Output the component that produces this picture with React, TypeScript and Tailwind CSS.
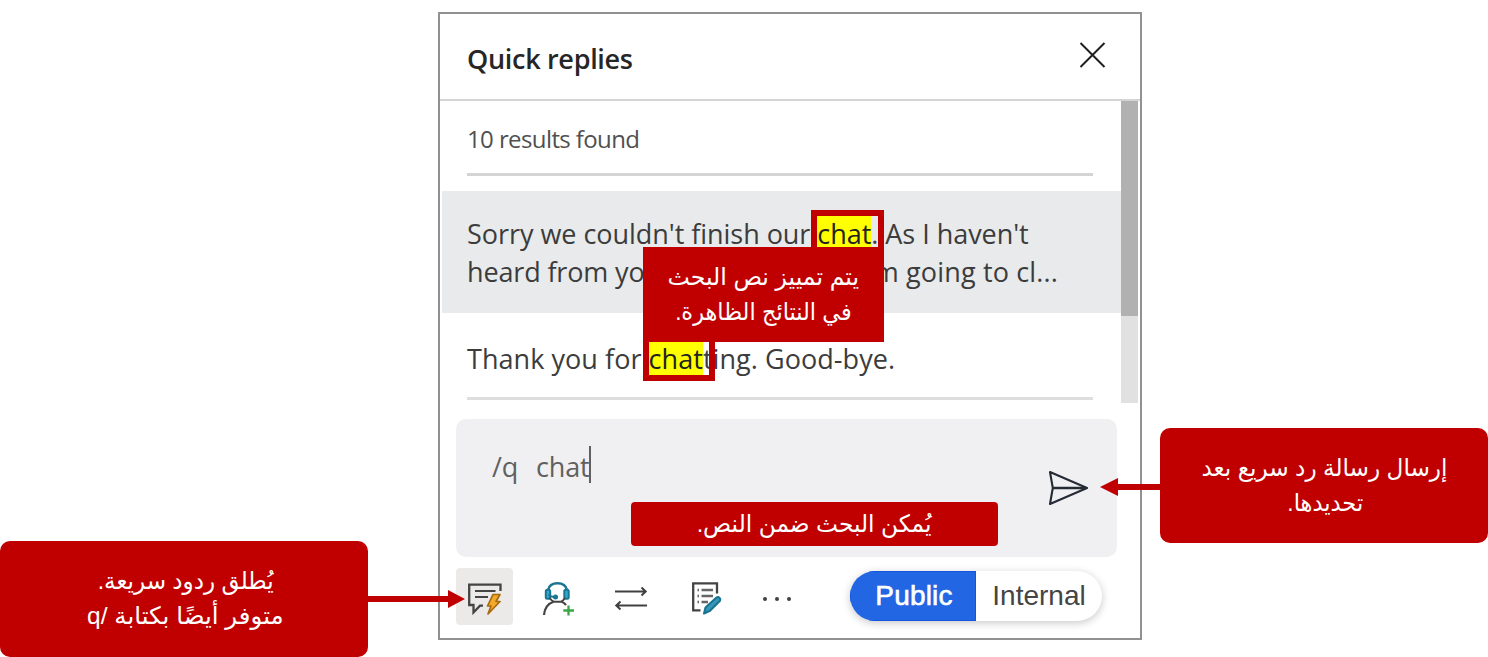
import type { ReactNode } from "react";

const latin = "font-['Open_Sans','Noto_Sans',sans-serif]";
const arabic = "font-['Liberation_Sans','DejaVu_Sans',sans-serif]";

function QuickReplyIcon() {
  return (
    <svg width="37" height="36" viewBox="0 0 37 36" fill="none">
      <path d="M34.5 10V3.700H3.200V24H7.500V31.500L14 24.700H17" stroke="#444" strokeWidth="2.3" />
      <path d="M9 10H29.500M9 16H22" stroke="#444" strokeWidth="2.2" />
      <path d="M27 13.500H34L30 20.500H34L22 33L25 25H21.500Z" fill="#f3a92c" stroke="#a96a0b" strokeWidth="1.7" strokeLinejoin="round" />
    </svg>
  );
}

function AgentIcon() {
  return (
    <svg width="34" height="36" viewBox="0 0 34 36" fill="none">
      <path d="M6 9C7 4.5 10.800 2.200 15.500 2.200S24 4.500 25 9" stroke="#1a7592" strokeWidth="2.5" />
      <rect x="3.800" y="8.800" width="4.400" height="9" rx="1.500" fill="#35a9cb" stroke="#1a7592" strokeWidth="2" />
      <rect x="22.300" y="8.800" width="4.400" height="9" rx="1.500" fill="#35a9cb" stroke="#1a7592" strokeWidth="2" />
      <path d="M7.500 17C9 19 10.500 20.200 12 20.700H19C21 20 22 18.500 23 17" stroke="#444" strokeWidth="2" />
      <path d="M6.500 13.500C8 15.500 10 16 12.500 16" stroke="#1a7592" strokeWidth="1.800" />
      <circle cx="13.500" cy="16" r="2.500" fill="#1a7592" />
      <path d="M2 34C2.600 27 6 22.500 11.500 20.700M19.500 20.700C21.500 21.300 22.800 22.300 24 24" stroke="#444" strokeWidth="2.200" />
      <path d="M26.500 24.500V34.500M21.300 29.500H32" stroke="#3aa648" strokeWidth="2.300" />
    </svg>
  );
}

function TransferIcon() {
  return (
    <svg width="34" height="26" viewBox="0 0 34 26" fill="none" stroke="#404040" strokeWidth="2">
      <path d="M1 6.500H31.500M27.500 2.500L31.700 6.500L27.500 10.500" />
      <path d="M33 20.500H2.500M6.500 16.500L2.300 20.500L6.500 24.500" />
    </svg>
  );
}

function NotesIcon() {
  return (
    <svg width="32" height="34" viewBox="0 0 32 34" fill="none">
      <path d="M26 12.500V2.300H2.200V29.300H9.500" stroke="#444" strokeWidth="2.300" />
      <path d="M6.500 9H8M10.500 9H22M6.500 15H8M10.500 15H22M6.500 21H8M10.500 21H17" stroke="#666" strokeWidth="2.300" />
      <path d="M13 32.500L14.500 26.500L25.500 16.500C27.500 15.200 30.300 17.400 29 19.800L18.500 30.200Z" fill="#3795b5" stroke="#167392" strokeWidth="2" strokeLinejoin="round" />
    </svg>
  );
}

function SendIcon() {
  return (
    <svg width="42" height="36" viewBox="0 0 42 36" fill="none" stroke="#252a34" strokeWidth="2.100" strokeLinejoin="round">
      <path d="M3 2L40 18L3 34L5.800 18Z" />
      <path d="M6 18H39" strokeWidth="2.600" />
    </svg>
  );
}

function Highlight({ children }: { children: ReactNode }) {
  return <mark className="bg-[#ffff00] text-[#222]">{children}</mark>;
}

function Callout({ className, children }: { className: string; children: ReactNode }) {
  return (
    <div dir="rtl" className={`absolute flex flex-col items-center justify-center bg-[#c00000] pb-[2px] text-[24px] leading-[35px] whitespace-nowrap text-white ${arabic} ${className}`}>
      {children}
    </div>
  );
}

export default function App() {
  return (
    <main className="relative h-[657px] w-[1488px] overflow-hidden bg-white pt-3 pl-[438px]">
      <section className={`flex h-[628px] w-[704px] flex-col border-2 border-[#919191] bg-white whitespace-nowrap ${latin}`}>
        <header className="flex h-[87px] shrink-0 justify-between border-b-2 border-[#d4d4d4] pl-[27px] pr-[34px]">
          <h1 className="pt-[26px] text-[27px] leading-[38px] font-semibold tracking-[-0.3px] text-[#262626]">Quick replies</h1>
          <svg className="mt-[27px]" width="28" height="28" viewBox="0 0 28 28" stroke="#202020" strokeWidth="2">
            <path d="M2.500 2L26.500 26M26.500 2L2.500 26" />
          </svg>
        </header>

        <div className="flex h-[302px] shrink-0 pr-0.5">
          <div className="flex-1 text-[27px] leading-[38px] text-[#3c3c3c]">
            <div className="mr-7 ml-[27px] h-[75px] border-b-3 border-[#d4d4d4] pt-[19px] text-[24px] tracking-[-0.6px] text-[#505050]">
              10 results found
            </div>
            <div className="mt-[15px] ml-0.5 h-[122px] bg-[#e8eaeb] pt-6 pl-[25px]">
              <p className="h-[38px] tracking-[-0.04px]">
                Sorry we couldn't finish our <Highlight>chat</Highlight>. As I haven't
              </p>
              <p className="flex h-[38px] w-[591px] justify-between">
                <span className="tracking-[-0.15px]">heard from yo</span>
                <span className="tracking-[0.15px]">m going to cl...</span>
              </p>
            </div>
            <div className="mr-7 ml-[27px] h-[87px] border-b-3 border-[#dedede] pt-[27px] tracking-[0.05px]">
              Thank you for <Highlight>chat</Highlight>ting. Good-bye.
            </div>
          </div>
          <div className="w-[17px] bg-[#e1e1e1]">
            <div className="h-[215px] bg-[#b1b1b1]" />
          </div>
        </div>

        <div className="mt-4 mr-[23px] ml-4 flex h-[138px] shrink-0 justify-between rounded-[10px] bg-[#f0f0f2] pt-[27px] pr-7 pl-9">
          <div className="flex h-[38px] text-[27px] leading-[41px] tracking-[-0.2px] whitespace-pre text-[#606060] [word-spacing:2.2px]">
            <span>/q  chat</span>
            <span className="h-[37px] w-0.5 bg-[#606060]" />
          </div>
          <div className="mt-[24px]"><SendIcon /></div>
        </div>

        <footer className="flex items-start pt-[11px] pl-4">
          <div className="flex h-[57px] w-[57px] items-center justify-center rounded bg-[#ebeae9] pt-1"><QuickReplyIcon /></div>
          <div className="ml-[29px] mt-[13px]"><AgentIcon /></div>
          <div className="ml-[38px] mt-[17px]"><TransferIcon /></div>
          <div className="ml-[43px] mt-[13px]"><NotesIcon /></div>
          <div className="mt-[29px] ml-[40px] flex gap-2">
            <span className="size-1 rounded-full bg-[#404040]" />
            <span className="size-1 rounded-full bg-[#404040]" />
            <span className="size-1 rounded-full bg-[#404040]" />
          </div>
          <div className="mt-[3px] ml-[59px] flex h-[50px] w-[252px] overflow-hidden rounded-full bg-white font-['Liberation_Sans',sans-serif] text-[28px] leading-[50px] shadow-[0_2px_8px_rgba(0,0,0,0.22)]">
            <div className="w-[126px] border border-[#1554dc] bg-[#2266e3] pl-[2px] text-center leading-[48px] tracking-[0.2px] text-white [-webkit-text-stroke:0.6px_white]">Public</div>
            <div className="flex-1 text-center text-[#444]">Internal</div>
          </div>
        </footer>
      </section>

      <div className="absolute top-[210px] left-[811px] h-[44px] w-[73px] border-6 border-[#c00000]" />
      <div className="absolute top-[336px] left-[643px] h-[45px] w-[72px] border-6 border-[#c00000]" />

      <Callout className="top-[247px] left-[643px] h-[95px] w-[241px]">
        <span className="scale-x-[0.985]">يتم تمييز نص البحث</span>
        <span className="scale-x-[0.935]">في النتائج الظاهرة.</span>
      </Callout>
      <Callout className="top-[502px] left-[631px] h-[44px] w-[367px] rounded-[4px]">
        <span className="scale-x-[0.97]">يُمكن البحث ضمن النص.</span>
      </Callout>
      <Callout className="top-[541px] left-0 h-[116px] w-[368px] rounded-[10px] pl-[2px]">
        <span className="scale-x-[0.96] pl-[1px]">يُطلق ردود سريعة.</span>
        <span className="scale-x-[1.02]">متوفر أيضًا بكتابة /q</span>
      </Callout>
      <Callout className="top-[428px] left-[1160px] h-[115px] w-[328px] rounded-[10px]">
        <span className="scale-x-[0.965]">إرسال رسالة رد سريع بعد</span>
        <span className="scale-x-[0.94] pl-[2px]">تحديدها.</span>
      </Callout>

      <svg className="absolute top-[590px] left-[368px]" width="98" height="18" viewBox="0 0 98 18">
        <path d="M0 6H80V0L97 9L80 18V12H0Z" fill="#c00000" />
      </svg>
      <svg className="absolute top-[478px] left-[1100px]" width="60" height="18" viewBox="0 0 60 18">
        <path d="M60 6H18V0L0 9L18 18V12H60Z" fill="#c00000" />
      </svg>
    </main>
  );
}
